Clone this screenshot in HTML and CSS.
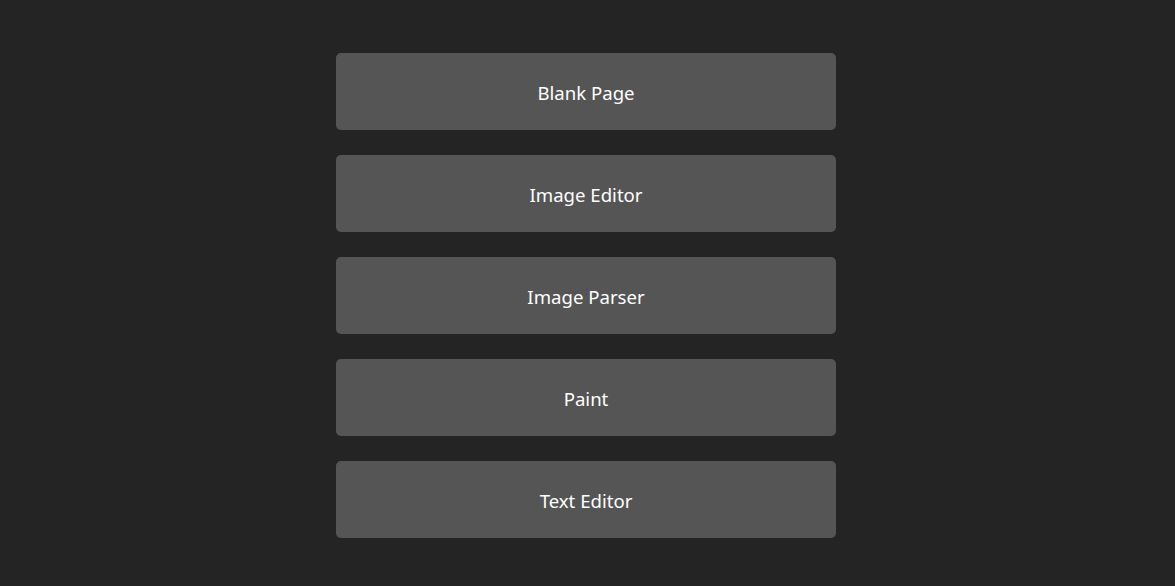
FILE: index.html
```html
<!DOCTYPE html>
<html>
<head>
<meta charset="utf-8">
<link rel="stylesheet" href="styles.css">
</head>
<body>
<div class="menu">
  <button class="item">Blank Page</button>
  <button class="item">Image Editor</button>
  <button class="item">Image Parser</button>
  <button class="item">Paint</button>
  <button class="item">Text Editor</button>
</div>
</body>
</html>
```
FILE: styles.css
```css
html, body {
  margin: 0;
  padding: 0;
  background: #242424;
  height: 100%;
}
.menu {
  display: flex;
  flex-direction: column;
  align-items: center;
  gap: 25px;
  padding: 53px 3px 0 0;
}
.item {
  width: 500px;
  height: 77px;
  border: none;
  border-radius: 5px;
  background: #555555;
  color: #ffffff;
  font-family: "Noto Sans", "Open Sans", sans-serif;
  font-size: 18.6px;
  padding: 2px 0 0 0;
  margin: 0;
  cursor: pointer;
}
```
